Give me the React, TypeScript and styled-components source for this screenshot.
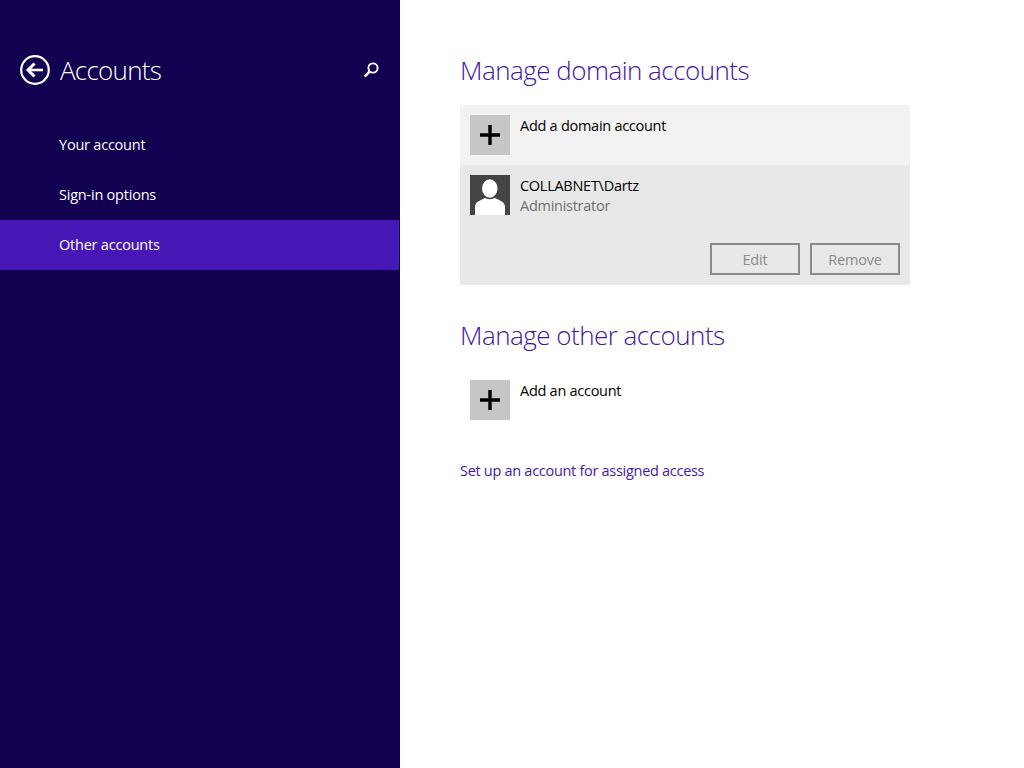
import React from "react";
import styled, { createGlobalStyle } from "styled-components";

const Global = createGlobalStyle`
  html, body { margin: 0; padding: 0; height: 100%; background: #fff; }
  body { font-family: "Open Sans", "Liberation Sans", sans-serif; }
  #root { height: 768px; overflow: hidden; }
`;

const Page = styled.div`
  display: flex;
  width: 1024px;
  height: 768px;
`;

const Sidebar = styled.aside`
  width: 400px;
  flex: none;
  background: #120050;
  color: #fff;
  display: flex;
  flex-direction: column;
`;

const SideHeader = styled.header`
  height: 50px;
  margin-top: 45px;
  margin-bottom: 25px;
  padding: 0 21px 0 20px;
  display: flex;
  align-items: center;
  justify-content: space-between;
`;

const TitleGroup = styled.div`
  display: flex;
  align-items: center;
  gap: 10px;
`;

const SideTitle = styled.h1`
  margin: 0;
  font-size: 26px;
  line-height: 50px;
  font-weight: 300;
  letter-spacing: -0.75px;
`;

const Nav = styled.nav`
  display: flex;
  flex-direction: column;
  width: 399px;
`;

const NavItem = styled.a<{ $active?: boolean }>`
  height: 50px;
  padding: 0 0 2px 59px;
  box-sizing: border-box;
  display: flex;
  align-items: center;
  font-size: 14.5px;
  letter-spacing: -0.22px;
  color: #fff;
  background: ${(p) => (p.$active ? "#4617b4" : "transparent")};
`;

const Main = styled.main`
  flex: 1;
  padding: 46px 0 0 60px;
  color: #000;
`;

const Heading = styled.h2`
  margin: 0 0 9px;
  height: 50px;
  font-size: 26px;
  line-height: 48px;
  font-weight: 300;
  letter-spacing: -0.52px;
  color: #4314a8;
`;

const Panel = styled.section`
  width: 450px;
  height: 180px;
  margin-bottom: 26px;
  display: flex;
  flex-direction: column;
`;

const Row = styled.div<{ $tone?: "light" | "mid" }>`
  display: flex;
  gap: 10px;
  padding: 10px;
  box-sizing: border-box;
  width: 450px;
  background: ${(p) =>
    p.$tone === "light" ? "#f2f2f2" : p.$tone === "mid" ? "#e8e8e8" : "transparent"};
`;

const AddRow = styled(Row)`
  height: 60px;
`;

const AccountRow = styled(Row)`
  height: 120px;
  flex-wrap: wrap;
  align-content: space-between;
`;

const Tile = styled.div`
  width: 40px;
  height: 40px;
  flex: none;
  background: #c6c6c6;
  display: flex;
  align-items: center;
  justify-content: center;
`;

const Avatar = styled(Tile)`
  background: #444444;
`;

const RowText = styled.div`
  display: flex;
  flex-direction: column;
  padding-top: 1px;
  font-size: 14.5px;
  line-height: 20px;
  letter-spacing: -0.27px;
  flex: 1;
`;

const Sub = styled.span`
  color: #6f6f6f;
`;

const Actions = styled.div`
  width: 100%;
  display: flex;
  justify-content: flex-end;
  gap: 10px;
`;

const Button = styled.button`
  width: 90px;
  height: 32px;
  box-sizing: border-box;
  background: transparent;
  border: 2px solid #8a8a8a;
  padding: 0;
  font-family: inherit;
  font-size: 14.5px;
  letter-spacing: -0.2px;
  color: #8a8a8a;
`;

const PlainRow = styled(Row)`
  height: 60px;
  margin-bottom: 31px;
`;

const LinkText = styled.a`
  display: block;
  font-size: 14.5px;
  line-height: 20px;
  letter-spacing: -0.29px;
  color: #3f1aa8;
`;

const Plus = () => (
  <svg width="20" height="20" viewBox="0 0 20 20" aria-hidden="true">
    <path d="M0 10h20M10 0v20" stroke="#000" strokeWidth="3.4" fill="none" />
  </svg>
);

const BackIcon = () => (
  <svg width="30" height="30" viewBox="0 0 30 30" aria-hidden="true">
    <circle cx="15" cy="15" r="13.8" stroke="#fff" strokeWidth="2.2" fill="none" />
    <path d="M8 15H23" stroke="#fff" strokeWidth="2.6" fill="none" />
    <path d="M14.5 8.5L8 15l6.5 6.5" stroke="#fff" strokeWidth="3" fill="none" />
  </svg>
);

const SearchIcon = () => (
  <svg width="16" height="16" viewBox="0 0 16 16" aria-hidden="true">
    <circle cx="10" cy="6" r="4.6" stroke="#fff" strokeWidth="1.9" fill="none" />
    <path d="M6.8 9.4L1.6 14.6" stroke="#fff" strokeWidth="2.6" fill="none" />
  </svg>
);

const Person = () => (
  <svg width="40" height="40" viewBox="0 0 40 40" aria-hidden="true">
    <path d="M5 40V32C5 27 10 25.500 15 23H25C30 25.500 35 27 35 32V40Z" fill="#fff" />
    <ellipse cx="19.800" cy="13.500" rx="8.500" ry="10" fill="#fff" stroke="#444444" strokeWidth="1.500" />
  </svg>
);

export default function App() {
  return (
    <Page>
      <Global />
      <Sidebar>
        <SideHeader>
          <TitleGroup>
            <BackIcon />
            <SideTitle>Accounts</SideTitle>
          </TitleGroup>
          <SearchIcon />
        </SideHeader>
        <Nav>
          <NavItem>Your account</NavItem>
          <NavItem>Sign-in options</NavItem>
          <NavItem $active>Other accounts</NavItem>
        </Nav>
      </Sidebar>
      <Main>
        <Heading>Manage domain accounts</Heading>
        <Panel>
          <AddRow $tone="light">
            <Tile>
              <Plus />
            </Tile>
            <RowText>Add a domain account</RowText>
          </AddRow>
          <AccountRow $tone="mid">
            <Avatar>
              <Person />
            </Avatar>
            <RowText>
              <span>COLLABNET\Dartz</span>
              <Sub>Administrator</Sub>
            </RowText>
            <Actions>
              <Button>Edit</Button>
              <Button>Remove</Button>
            </Actions>
          </AccountRow>
        </Panel>
        <Heading>Manage other accounts</Heading>
        <PlainRow>
          <Tile>
            <Plus />
          </Tile>
          <RowText>Add an account</RowText>
        </PlainRow>
        <LinkText>Set up an account for assigned access</LinkText>
      </Main>
    </Page>
  );
}
